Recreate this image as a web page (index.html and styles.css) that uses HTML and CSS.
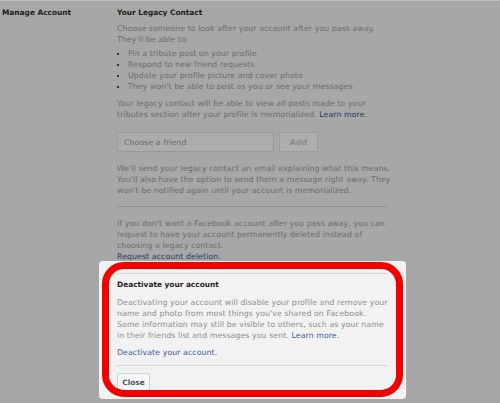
FILE: index.html
```html
<!DOCTYPE html>
<html lang="en">
<head>
    <meta charset="UTF-8">
    <meta name="viewport" content="width=device-width, initial-scale=1.0">
    <title>Manage Account</title>
    <link rel="stylesheet" href="styles.css">
</head>
<body>
    <div class="settings">
        <div class="label">Manage Account</div>
        <div class="section">
            <h2>Your Legacy Contact</h2>
            <p class="intro">Choose someone to look after your account after you pass away.<br>They'll be able to:</p>
            <ul class="abilities">
                <li>Pin a tribute post on your profile</li>
                <li>Respond to new friend requests</li>
                <li>Update your profile picture and cover photo</li>
                <li>They won't be able to post as you or see your messages</li>
            </ul>
            <p>Your legacy contact will be able to view all posts made to your<br>tributes section after your profile is memorialized. <a href="#">Learn more.</a></p>

            <div class="friend-row">
                <div class="friend-input">Choose a friend</div>
                <div class="add-button">Add</div>
            </div>

            <p>We'll send your legacy contact an email explaining what this means.<br>You'll also have the option to send them a message right away. They<br>won't be notified again until your account is memorialized.</p>

            <hr class="divider">

            <p>If you don't want a Facebook account after you pass away, you can<br>request to have your account permanently deleted instead of<br>choosing a legacy contact.<br><a href="#">Request account deletion.</a></p>
        </div>
    </div>

    <div class="dialog">
        <div class="dialog-body">
            <h3>Deactivate your account</h3>
            <p>Deactivating your account will disable your profile and remove your<br>name and photo from most things you've shared on Facebook.<br>Some information may still be visible to others, such as your name<br>in their friends list and messages you sent. <a href="#">Learn more.</a></p>
            <a class="dialog-link" href="#">Deactivate your account.</a>
            <div class="dialog-footer">
                <button class="close-button">Close</button>
            </div>
        </div>
    </div>

    <div class="highlight"></div>
</body>
</html>
```

FILE: styles.css
```css
body {
    margin: 0;
    height: 403px;
    overflow: hidden;
    background: #a7a7a7;
    border-top: 1px solid #bcbcbc;
    font-family: 'DejaVu Sans', Verdana, sans-serif;
    font-size: 7.8px;
    letter-spacing: 0.08px;
    line-height: 11px;
    color: #6c6c6c;
    position: relative;
}

a {
    color: #27375f;
    text-decoration: none;
}

.settings {
    display: flex;
    padding: 6px 0 0 2px;
}

.label {
    width: 115px;
    font-size: 7.4px;
    letter-spacing: 0;
    font-weight: bold;
    color: #1c1c1c;
}

.section {
    width: 270px;
    white-space: nowrap;
}

.section h2 {
    margin: 0 0 5px;
    font-size: 7.4px;
    letter-spacing: 0;
    color: #1c1c1c;
}

.section p {
    margin: 0;
}

.abilities {
    margin: 3px 0 6px;
    padding-left: 11px;
    color: #6c6c6c;
}

.abilities li::marker {
    color: #111;
}

.friend-row {
    display: flex;
    gap: 5px;
    margin: 12px 0 11px;
}

.friend-input {
    width: 157px;
    height: 20px;
    border: 1px solid #999;
    box-sizing: border-box;
    padding: 4px 6px;
    color: #6a6a6a;
    background: #acacac;
}

.add-button {
    width: 39px;
    height: 20px;
    border: 1px solid #9c9c9c;
    box-sizing: border-box;
    text-align: center;
    padding-top: 4px;
    font-weight: bold;
    color: #8c8c8c;
    background: #aeaeae;
}

.divider {
    border: none;
    border-top: 1px solid #909090;
    margin: 10px 0 11px;
}

.dialog {
    position: absolute;
    left: 99px;
    top: 260px;
    width: 307px;
    height: 138px;
    box-sizing: border-box;
    padding: 12px 19px 0 18px;
    background: #f2f2f2;
    border-radius: 4px;
    color: #8e8e8e;
    white-space: nowrap;
}

.dialog a {
    color: #3b5a98;
}

.dialog-body {
    border-top: 1px solid #d6d6d6;
    padding-top: 5px;
}

.dialog-body h3 {
    margin: 0 0 7px;
    font-size: 7.4px;
    letter-spacing: 0;
    color: #1e1e1e;
}

.dialog-body p {
    margin: 0 0 6px;
}

.dialog-link {
    display: block;
}

.dialog-footer {
    border-top: 1px solid #d6d6d6;
    margin-top: 7px;
    padding-top: 7px;
}

.close-button {
    font-family: inherit;
    font-size: 7.4px;
    font-weight: bold;
    color: #4b4f56;
    background: #f6f7f9;
    border: 1px solid #cfd2d6;
    border-radius: 2px;
    width: 33px;
    height: 18px;
    padding: 0;
}

.highlight {
    position: absolute;
    left: 102px;
    top: 261px;
    width: 301px;
    height: 135px;
    box-sizing: border-box;
    border: 7px solid #f20000;
    border-radius: 22px;
}
```
